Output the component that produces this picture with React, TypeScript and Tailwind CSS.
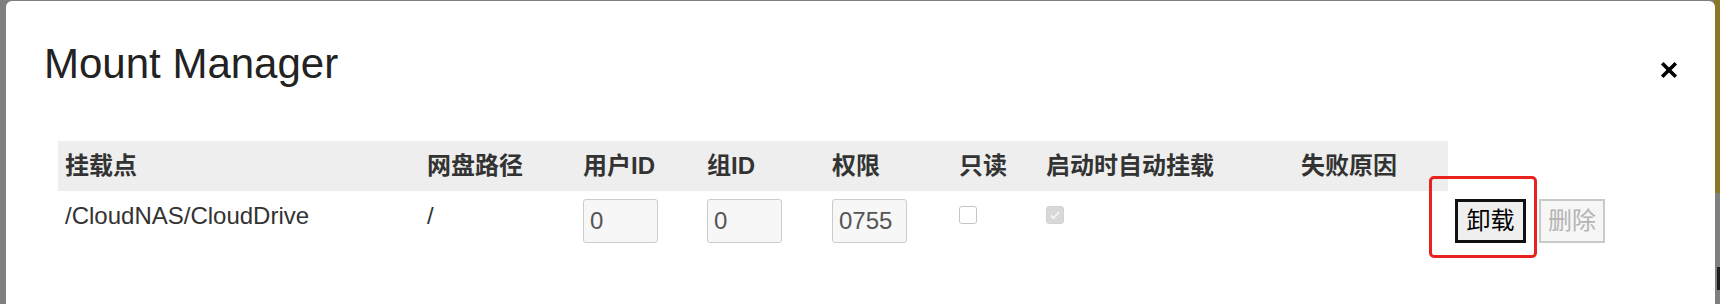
import React from 'react';

const font = "font-['Liberation_Sans','Noto_Sans_CJK_SC',sans-serif]";

const headers = ['挂载点', '网盘路径', '用户ID', '组ID', '权限', '只读', '启动时自动挂载', '失败原因'];

const Field: React.FC<{ value: string }> = ({ value }) => (
    <input
        readOnly
        value={value}
        className={`${font} block h-[44px] w-[75px] rounded-[3px] border border-[#cccccc] bg-[#f7f7f7] px-[6px] text-[24px] text-[#555555] outline-none`}
    />
);

const Check: React.FC<{ checked?: boolean }> = ({ checked }) =>
    checked ? (
        <span className="mt-[7px] flex h-[18px] w-[18px] items-center justify-center rounded-[3px] border border-[#d2d2d2] bg-[#d8d8d8]">
            <svg width="12" height="12" viewBox="0 0 12 12" fill="none">
                <path d="M2 6.5l2.6 2.6L10 3" stroke="#f4f4f4" strokeWidth="1.8" />
            </svg>
        </span>
    ) : (
        <span className="mt-[7px] block h-[18px] w-[18px] rounded-[3px] border border-[#c4c4c4] bg-white" />
    );

export default function App() {
    return (
        <div className={`${font} relative h-[304px] w-[1720px] overflow-hidden bg-[#7f7f7f] pl-[6px] pt-[1px]`}>
            {/* page behind the backdrop */}
            <div className="absolute right-0 top-0 h-[193px] w-[6px] bg-[#8c7628]" />
            <div className="absolute right-0 top-[267px] h-[23px] w-[3px] bg-[#1e1e1e]" />

            <div className="relative h-[303px] w-[1709px] rounded-t-[6px] bg-white">
                <div className="flex items-start justify-between pl-[38px] pr-[37px] pt-[40px]">
                    <h4 className="text-[42px] font-normal leading-[1.1] text-[#222222]">Mount Manager</h4>
                    <button className="mt-[20px]" aria-label="close">
                        <svg width="18" height="18" viewBox="0 0 18 18">
                            <path d="M2.2 2.2L15.8 15.8M15.8 2.2L2.2 15.8" stroke="#000" strokeWidth="3.6" />
                        </svg>
                    </button>
                </div>

                <div className="ml-[52px] mt-[54px] grid grid-cols-[362px_156px_124px_125px_127px_87px_255px_154px_auto] text-[24px] text-[#333333]">
                    {headers.map((h) => (
                        <div key={h} className="flex h-[50px] items-center bg-[#eeeeee] px-[7px] font-bold">
                            {h}
                        </div>
                    ))}
                    <div />

                    <div className="px-[7px] pt-[8px] leading-[34px]">/CloudNAS/CloudDrive</div>
                    <div className="px-[7px] pt-[8px] leading-[34px]">/</div>
                    <div className="px-[7px] pt-[8px]">
                        <Field value="0" />
                    </div>
                    <div className="px-[7px] pt-[8px]">
                        <Field value="0" />
                    </div>
                    <div className="px-[7px] pt-[8px]">
                        <Field value="0755" />
                    </div>
                    <div className="px-[7px] pt-[8px]">
                        <Check />
                    </div>
                    <div className="px-[7px] pt-[8px]">
                        <Check checked />
                    </div>
                    <div className="px-[7px] pt-[8px]" />
                    <div className="relative flex gap-[13px] pl-[7px] pt-[8px]">
                        <button className="h-[44px] w-[71px] border-[3px] border-[#111111] bg-[#efefef] text-[24px] leading-none text-black">
                            卸载
                        </button>
                        <button
                            disabled
                            className="h-[44px] w-[66px] border-2 border-[#c9c9c9] bg-[#f6f6f6] text-[24px] leading-none text-[#b3b3b3]"
                        >
                            删除
                        </button>
                        {/* annotation */}
                        <div className="pointer-events-none absolute left-[-19px] top-[-15px] h-[82px] w-[108px] rounded-[5px] border-[3px] border-[#e8231f]" />
                    </div>
                </div>
            </div>
        </div>
    );
}
